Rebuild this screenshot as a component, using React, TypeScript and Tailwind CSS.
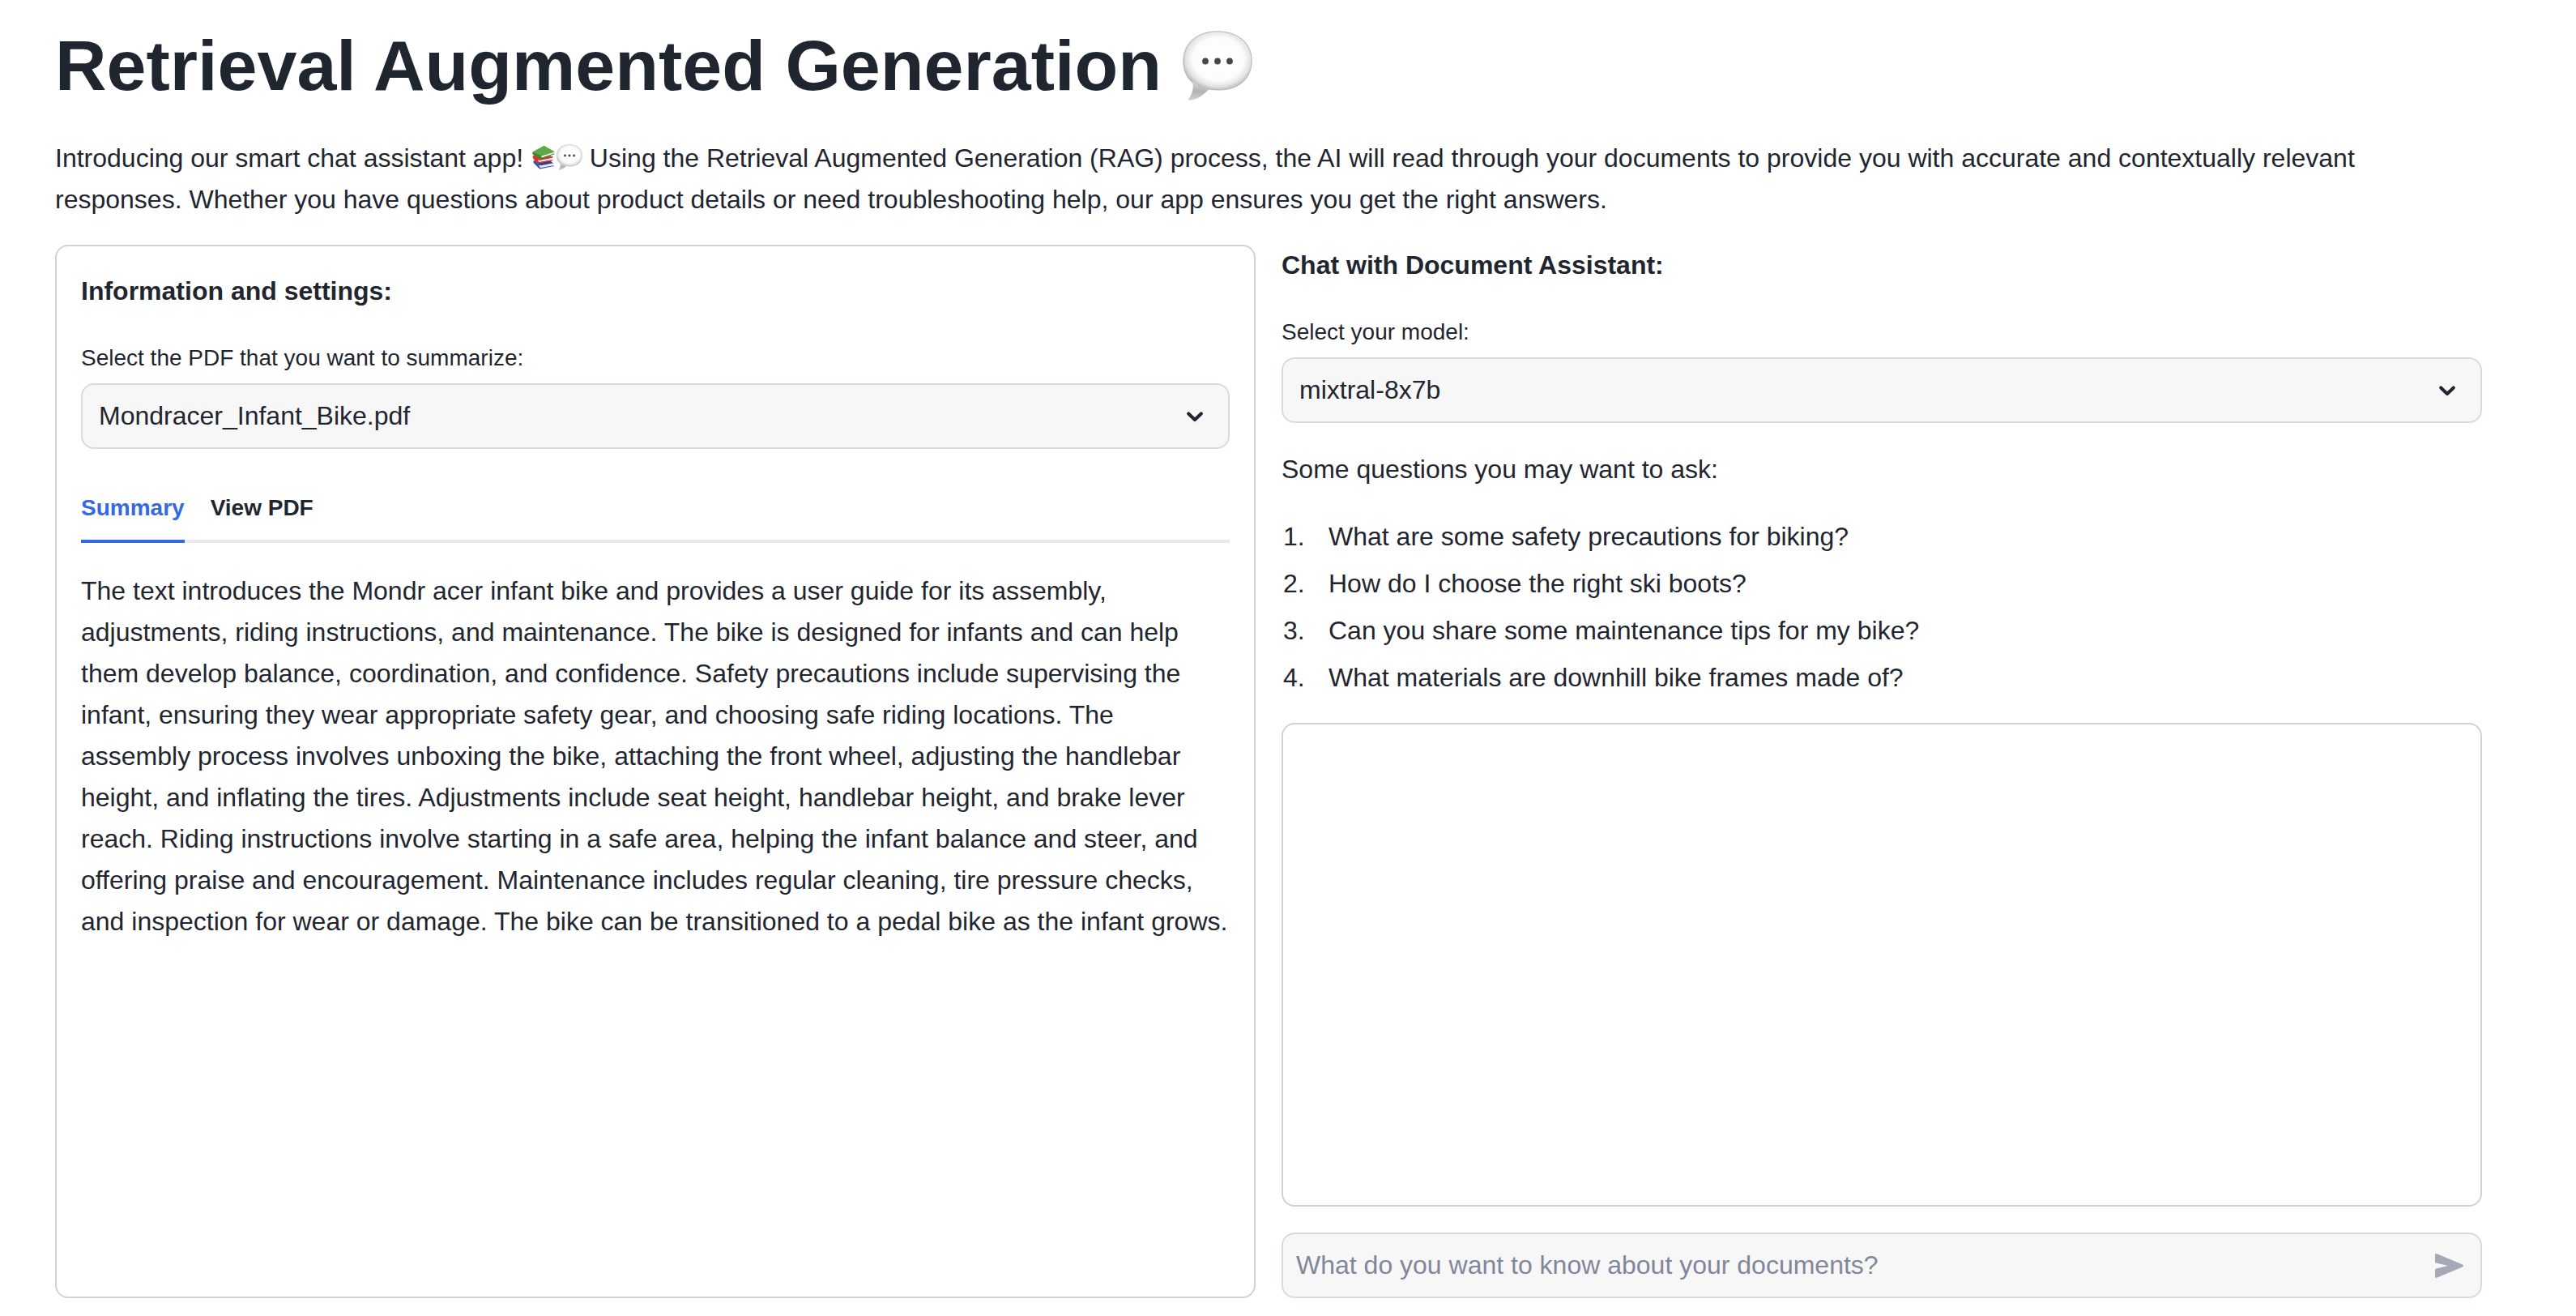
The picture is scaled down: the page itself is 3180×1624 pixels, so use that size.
import { useState } from "react";

function SpeechBalloon({ className, id }: { className: string; id: string }) {
  return (
    <svg viewBox="0 0 86 86" className={className} role="img" aria-label="Speech balloon">
      <defs>
        <radialGradient id={id} cx="0.51" cy="0.47" r="0.56">
          <stop offset="0" stopColor="#ffffff" />
          <stop offset="0.66" stopColor="#fcfcfc" />
          <stop offset="0.84" stopColor="#e4e4e4" />
          <stop offset="1" stopColor="#adadad" />
        </radialGradient>
        <linearGradient id={id + "-tail"} x1="0.4" y1="0" x2="0.3" y2="1">
          <stop offset="0" stopColor="#d6d6d6" />
          <stop offset="0.55" stopColor="#b2b2b2" />
          <stop offset="1" stopColor="#d2d2d2" />
        </linearGradient>
      </defs>
      <path
        d="M43 .8C68 .8 85.200 15 85.200 37S69 73 45 73c-5 0-9-.4-13-1L13 64.500C5 58 .8 49 .8 37.500.8 15 18 .8 43 .8Z"
        fill={"url(#" + id + ")"}
        stroke="#b5b5b5"
        strokeWidth="1"
      />
      <path
        d="M12 62C14 70 12 78 7.500 83.500c-1 1.300-.3 2.300 1.200 2.200C18 85 26 79 33 71.500C26 70 18 67 12 62Z"
        fill={"url(#" + id + "-tail)"}
      />
      <circle cx="28" cy="37.500" r="3.900" fill="#474747" />
      <circle cx="43" cy="37.500" r="3.900" fill="#474747" />
      <circle cx="58" cy="37.500" r="3.900" fill="#474747" />
    </svg>
  );
}

function Books({ className }: { className: string }) {
  return (
    <svg viewBox="50 38 84 88" className={className} role="img" aria-label="Books">
      <path d="M56 94 108 88 130 106 82 116Z" fill="#2b3f94" />
      <path d="M60 102 80 120 128 109 127 104 82 113Z" fill="#e6e4ee" />
      <path d="M56 94c-3 4-2 9 2 12l17 17c2 2 4 3 8 2l47-10v-3l-48 9c-7-2-8-9-4-12Z" fill="#3654b4" />
      <path d="M53 76 106 70 127 84 74 96Z" fill="#d5382b" />
      <path d="M60 84 76 101 124 92 124 85 76 94Z" fill="#f0eef0" />
      <path d="M53 75c-2 5-1 10 2 14l13 15c2 2 4 2 8 1l50-10v-4l-49 9c-6-2-7-7-4-10l54-9v-3l-53 8Z" fill="#d5382b" />
      <path d="M78 76 84 86 130 71 130 65Z" fill="#f3f4ee" />
      <path d="M52 62 94 39 132 61 82 78Z" fill="#5fa848" />
      <path d="M52 62c-2 5-1 9 2 11l25 14c3 2 6 1 8 0l45-16v-3L88 83c-5-1-6-4-3-7l47-13v-2L82 76Z" fill="#418532" />
    </svg>
  );
}

function Chevron() {
  return (
    <svg
      viewBox="0 0 8 8"
      className="pointer-events-none absolute right-[30px] top-1/2 size-[26px] -translate-y-1/2"
      fill="none"
      stroke="#1f2630"
      strokeWidth="1.250"
      strokeLinecap="round"
      strokeLinejoin="round"
      aria-hidden="true"
    >
      <path d="M1.600 2.900 4 5.250 6.400 2.900" />
    </svg>
  );
}

function SelectField({ id, label, options }: { id: string; label: string; options: string[] }) {
  return (
    <div className="flex flex-col">
      <label htmlFor={id} className="mb-1.5 text-[28px] leading-[50px]">
        {label}
      </label>
      <div className="relative">
        <select
          id={id}
          className="h-[81px] w-full appearance-none rounded-2xl border-2 border-[#d5dae5] bg-[#f7f7f7] px-5 text-[32px]"
        >
          {options.map((o) => (
            <option key={o}>{o}</option>
          ))}
        </select>
        <Chevron />
      </div>
    </div>
  );
}

const questions = [
  "What are some safety precautions for biking?",
  "How do I choose the right ski boots?",
  "Can you share some maintenance tips for my bike?",
  "What materials are downhill bike frames made of?",
];

const summary =
  "The text introduces the Mondr acer infant bike and provides a user guide for its assembly, adjustments, riding instructions, and maintenance. The bike is designed for infants and can help them develop balance, coordination, and confidence. Safety precautions include supervising the infant, ensuring they wear appropriate safety gear, and choosing safe riding locations. The assembly process involves unboxing the bike, attaching the front wheel, adjusting the handlebar height, and inflating the tires. Adjustments include seat height, handlebar height, and brake lever reach. Riding instructions involve starting in a safe area, helping the infant balance and steer, and offering praise and encouragement. Maintenance includes regular cleaning, tire pressure checks, and inspection for wear or damage. The bike can be transitioned to a pedal bike as the infant grows.";

const tabs = ["Summary", "View PDF"];

export default function App() {
  const [tab, setTab] = useState("Summary");
  return (
    <main className="flex min-h-screen flex-col bg-white pb-[22px] pl-[68px] pr-[116px] pt-7 font-['Liberation_Sans',Arial,sans-serif] text-[32px] leading-[51px] text-[#1f2630]">
      <h1 className="flex items-center gap-[26px] text-[88px] font-bold leading-[106px]">
        Retrieval Augmented Generation
        <SpeechBalloon id="balloon-title" className="size-[86px]" />
      </h1>
      <p className="mt-9">
        {"Introducing our smart chat assistant app! "}
        <Books className="ml-0.5 inline-block h-[30px] w-7 align-[-3px]" />
        <SpeechBalloon id="balloon-intro" className="ml-0.5 inline-block size-8 align-[-4px]" />
        {
          " Using the Retrieval Augmented Generation (RAG) process, the AI will read through your documents to provide you with accurate and contextually relevant responses. Whether you have questions about product details or need troubleshooting help, our app ensures you get the right answers."
        }
      </p>

      <div className="mt-[30px] grid flex-1 grid-cols-2 gap-8">
        <section className="flex flex-col rounded-2xl border-2 border-[#d2d2d4] p-[30px]">
          <h2 className="mb-8 font-bold">Information and settings:</h2>
          <SelectField
            id="pdf"
            label="Select the PDF that you want to summarize:"
            options={["Mondracer_Infant_Bike.pdf"]}
          />
          <div role="tablist" className="mt-8 flex gap-8 border-b-4 border-[#e8e9ea]">
            {tabs.map((t) => (
              <button
                key={t}
                type="button"
                role="tab"
                aria-selected={tab === t}
                onClick={() => setTab(t)}
                className={
                  tab === t
                    ? "-mb-1 h-[84px] border-b-4 border-[#3569df] text-[28px] font-bold text-[#3569df]"
                    : "-mb-1 h-[84px] border-b-4 border-transparent text-[28px] font-bold"
                }
              >
                {t}
              </button>
            ))}
          </div>
          <p className="mt-[34px]">{summary}</p>
        </section>

        <section className="flex flex-col">
          <h2 className="mb-8 font-bold">Chat with Document Assistant:</h2>
          <SelectField id="model" label="Select your model:" options={["mixtral-8x7b"]} />
          <p className="mt-8">Some questions you may want to ask:</p>
          <ol className="mt-8 flex flex-col gap-[7px] pl-0.5">
            {questions.map((q, i) => (
              <li key={q} className="flex">
                <span className="w-14">{i + 1}.</span>
                <span>{q}</span>
              </li>
            ))}
          </ol>
          <div className="mt-[30px] flex-1 rounded-2xl border-2 border-[#d2d2d4]" />
          <form
            className="mt-8 flex h-[81px] items-center rounded-2xl border-2 border-[#d5dae5] bg-[#f7f7f7] pl-4 pr-5"
            onSubmit={(e) => e.preventDefault()}
          >
            <input
              type="text"
              aria-label="Question about your documents"
              placeholder="What do you want to know about your documents?"
              className="min-w-0 flex-1 bg-transparent outline-none placeholder:text-[#82869a]"
            />
            <button type="submit" aria-label="Send">
              <svg viewBox="0 0 36 30" className="h-[30px] w-9" fill="#a5a8b8" aria-hidden="true">
                <path d="M0 10V1.500C0 .3 1.200-.3 2.300.2l31.500 13.200c1.600.7 1.600 2.500 0 3.200L2.300 29.800C1.200 30.300 0 29.700 0 28.500V20c0-.8.6-1.400 1.400-1.600L16 15 1.400 11.600C.6 11.400 0 10.800 0 10Z" />
              </svg>
            </button>
          </form>
        </section>
      </div>
    </main>
  );
}
